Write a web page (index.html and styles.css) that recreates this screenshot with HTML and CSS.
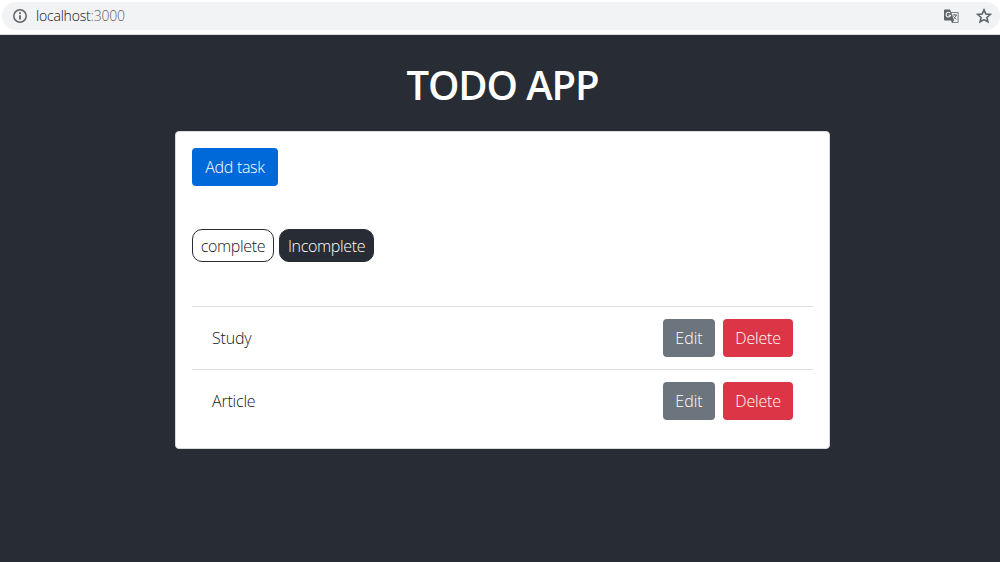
FILE: index.html
```html
<!DOCTYPE html>
<html lang="en">
<head>
<meta charset="utf-8">
<title>Todo App</title>
<link rel="stylesheet" href="styles.css">
</head>
<body>
<header class="toolbar">
  <div class="address">
    <svg class="info" width="14" height="14" viewBox="0 0 14 14"><circle cx="7" cy="7" r="6.2" fill="none" stroke="#5f6368" stroke-width="1.5"/><path d="M7 6.2V10.6M7 3.3V4.9" stroke="#5f6368" stroke-width="1.8"/></svg>
    <span class="url">localhost<span class="port">:3000</span></span>
    <svg class="translate" width="15" height="15" viewBox="0 0 15 15"><path d="M1 .5H6L7 3H13.6Q14.5 3 14.5 4V13Q14.5 14 13.6 14H8L7 11.5H1Q0 11.5 0 10.500V1.500Q0 .5 1 .5Z" fill="#5f6368"/><path d="M7.400 3.700H13.700V13.300H8.700L10 11.500Z" fill="#f1f3f4"/><path d="M6.200 4.200A2.300 2.300 0 1 0 6.600 6.200H4.500" fill="none" stroke="#f1f3f4" stroke-width="1.100"/><path d="M8.600 6H13M10.700 4.900V6M12.300 6Q11.500 8.700 9.500 10M9.500 7.300Q10.500 9.200 12.500 10.500" fill="none" stroke="#5f6368" stroke-width=".9"/></svg>
    <svg class="star" width="16" height="16" viewBox="0 0 16 16"><path d="M8 1.900L9.800 6.100L14.300 6.500L10.900 9.500L11.900 13.900L8 11.600L4.100 13.900L5.100 9.500L1.700 6.500L6.200 6.100Z" fill="none" stroke="#5f6368" stroke-width="1.600"/></svg>
  </div>
</header>
<main class="app">
  <h1 class="title">TODO APP</h1>
  <section class="card">
    <button class="btn btn-add">Add task</button>
    <nav class="filters">
      <span class="filter filter-complete">complete</span>
      <span class="filter filter-incomplete">Incomplete</span>
    </nav>
    <ul class="tasks">
      <li class="task"><span class="name">Study</span><button class="btn btn-edit">Edit</button><button class="btn btn-delete">Delete</button></li>
      <li class="task"><span class="name">Article</span><button class="btn btn-edit">Edit</button><button class="btn btn-delete">Delete</button></li>
    </ul>
  </section>
</main>
</body>
</html>
```
FILE: styles.css
```css
* { box-sizing: border-box; }
body {
  margin: 0;
  height: 562px;
  overflow: hidden;
  background: #282c34;
  color: #15181b;
  font: 300 16px/24px "Open Sans", "Noto Sans", sans-serif;
}
.toolbar {
  height: 35px;
  padding: 2px 0 0 2px;
  background: #fff;
  border-bottom: 1px solid #dadce0;
}
.address {
  display: flex;
  align-items: center;
  height: 28px;
  padding: 0 8px 0 11px;
  border-radius: 14px;
  background: #f1f3f4;
}
.url {
  flex: 1;
  margin-left: 9px;
  font-size: 14px;
  line-height: 28px;
  letter-spacing: -.2px;
  color: #101214;
}
.port { color: #5f6368; }
.translate { margin-right: 17px; }
.app {
  display: flex;
  flex-direction: column;
  align-items: center;
  padding-left: 5px;
}
.title {
  margin: 26px 0 22px;
  font-size: 40px;
  font-weight: 600;
  line-height: 48px;
  letter-spacing: -1.1px;
  color: #fff;
}
.card {
  width: 655px;
  height: 318px;
  padding: 16px;
  background: #fff;
  border: 1px solid #d9dadb;
  border-radius: 4px;
}
.btn {
  display: block;
  height: 38px;
  padding: 0;
  border: 0;
  border-radius: 4px;
  color: #fff;
  font: inherit;
  text-align: center;
}
.btn-add { width: 86px; background: #0069d9; letter-spacing: -.3px; }
.btn-edit { width: 52px; background: #6c757d; }
.btn-delete { width: 70px; margin-left: 8px; background: #dc3545; letter-spacing: -.2px; }
.filters {
  display: flex;
  gap: 5px;
  margin-top: 43px;
}
.filter {
  height: 33px;
  padding-top: 4px;
  border: 1px solid #282c34;
  border-radius: 10px;
  letter-spacing: -.35px;
  text-align: center;
}
.filter-complete { width: 82px; }
.filter-incomplete { width: 95px; background: #282c34; color: #fff; }
.tasks {
  margin: 44px 0 0;
  padding: 0;
  list-style: none;
}
.task {
  display: flex;
  align-items: center;
  height: 63px;
  padding: 0 20px;
  border-top: 1px solid #dfdfdf;
}
.name { flex: 1; letter-spacing: -.2px; }
```
